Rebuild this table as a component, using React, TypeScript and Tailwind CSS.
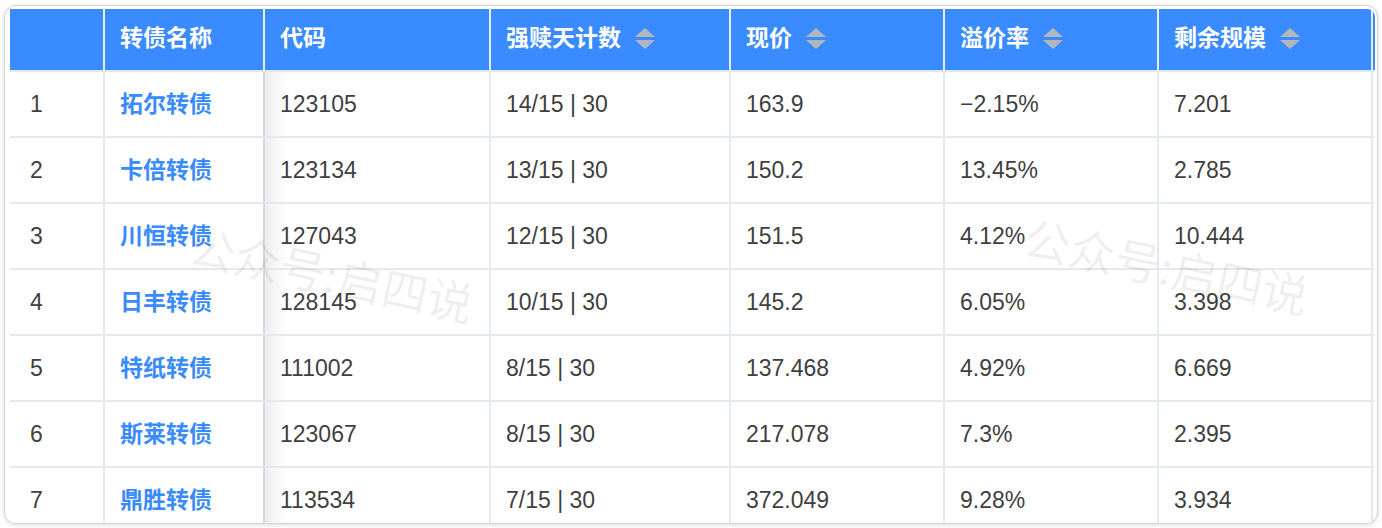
import React from "react";

const rows = [
  ["1", "拓尔转债", "123105", "14/15 | 30", "163.9", "−2.15%", "7.201"],
  ["2", "卡倍转债", "123134", "13/15 | 30", "150.2", "13.45%", "2.785"],
  ["3", "川恒转债", "127043", "12/15 | 30", "151.5", "4.12%", "10.444"],
  ["4", "日丰转债", "128145", "10/15 | 30", "145.2", "6.05%", "3.398"],
  ["5", "特纸转债", "111002", "8/15 | 30", "137.468", "4.92%", "6.669"],
  ["6", "斯莱转债", "123067", "8/15 | 30", "217.078", "7.3%", "2.395"],
  ["7", "鼎胜转债", "113534", "7/15 | 30", "372.049", "9.28%", "3.934"],
];

const headers: [string, boolean][] = [
  ["", false],
  ["转债名称", false],
  ["代码", false],
  ["强赎天计数", true],
  ["现价", true],
  ["溢价率", true],
  ["剩余规模", true],
];

const widths = ["w-[93px]", "w-[160px]", "w-[226px]", "w-[240px]", "w-[214px]", "w-[214px]", "w-[214px]"];

function SortIcon() {
  return (
    <svg width="20" height="24" viewBox="0 0 20 24" className="ml-[14px] shrink-0">
      <polygon points="10,1 20,10 0,10" fill="#b3b6bd" />
      <polygon points="0,13 20,13 10,22" fill="#b3b6bd" />
    </svg>
  );
}

const font = { fontFamily: '"Liberation Sans", "Noto Sans CJK SC", sans-serif' };
const wmFont = { fontFamily: '"Noto Sans CJK SC", sans-serif' };

export default function App() {
  return (
    <div className="w-[1382px] h-[528px] bg-white relative overflow-hidden" style={font}>
      <div className="absolute left-[4px] top-[5px] w-[1374px] h-[519px] rounded-[12px] border border-[#d6d6d6] shadow-[0_1px_4px_rgba(0,0,0,0.15)] bg-white overflow-hidden pl-[5px] pt-[3px] pr-[2px]">
        <div className="relative overflow-hidden rounded-tr-[8px]">
          {/* header */}
          <div className="flex h-[61px] bg-[#3a8bff]">
            {headers.map(([h, s], i) => (
              <div
                key={i}
                className={`${widths[i]} shrink-0 flex items-center pl-[15px] pb-[2px] text-white font-bold text-[23px] ${i > 0 ? "border-l-2 border-[#e6ecf5]" : ""}`}
              >
                <span>{h}</span>
                {s && <SortIcon />}
              </div>
            ))}
            <div className="w-[4px] border-l-2 border-[#e6ecf5] shrink-0" />
            <div className="w-[4px] bg-[#3a8bff] shrink-0" />
          </div>
          {/* body */}
          {rows.map((r, ri) => (
            <div key={ri} className="flex h-[66px] border-t-2 border-[#e4e8f1] bg-white">
              {r.map((c, ci) => (
                <div
                  key={ci}
                  className={`${widths[ci]} shrink-0 flex items-center text-[23px] ${ci > 0 ? "border-l-2 pl-[15px]" : "pl-[20px]"} ${ci === 2 ? "border-[#d3d7de] relative" : "border-[#e4e8f1]"} ${ci === 1 ? "text-[#3a8bff] font-bold" : "text-[#3f3f3f]"}`}
                >
                  {ci === 2 && (
                    <div className="absolute left-0 top-0 bottom-0 w-[22px] bg-gradient-to-r from-[rgba(0,0,0,0.07)] to-transparent" />
                  )}
                  <span className="relative">{c}</span>
                </div>
              ))}
              <div className="w-[4px] border-l-2 border-[#e4e8f1] shrink-0" />
              <div className="w-[4px] bg-[#dfe2ea] shrink-0" />
            </div>
          ))}
          {/* watermarks */}
          <div
            className="pointer-events-none absolute left-[322px] top-[264px] -translate-x-1/2 -translate-y-1/2 rotate-[12deg] text-[46px] leading-none text-[rgba(0,0,0,0.07)] whitespace-nowrap"
            style={wmFont}
          >
            公众号:启四说
          </div>
          <div
            className="pointer-events-none absolute left-[1157px] top-[256px] -translate-x-1/2 -translate-y-1/2 rotate-[12deg] text-[46px] leading-none text-[rgba(0,0,0,0.07)] whitespace-nowrap"
            style={wmFont}
          >
            公众号:启四说
          </div>
        </div>
      </div>
    </div>
  );
}
